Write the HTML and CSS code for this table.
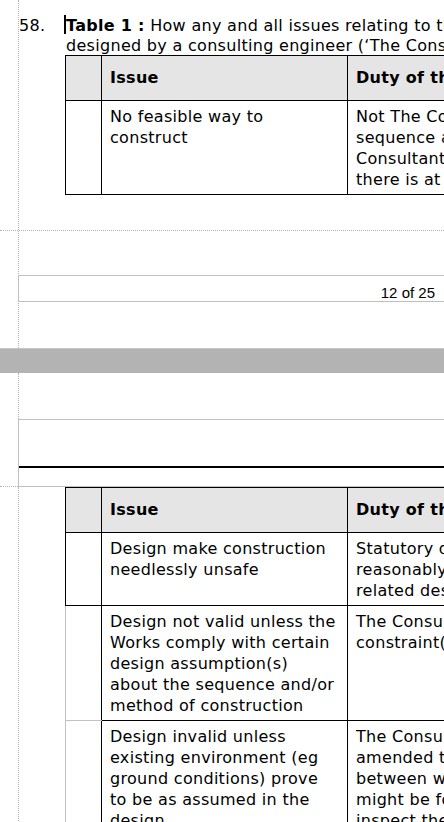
FILE: index.html
```html
<!DOCTYPE html>
<html>
<head>
<meta charset="utf-8">
<title>Document</title>
<link rel="stylesheet" href="styles.css">
</head>
<body>
<div class="viewer">
  <section class="page page-1">
    <div class="text-area">
      <div class="margin-col">
        <div class="para">
          <span class="num">58.</span>
          <div class="para-text">
            <span class="caret"></span><b>Table 1 :</b> How any and all issues relating to the constructability of Works<br>designed by a consulting engineer (‘The Consultant’) are to be dealt with
          </div>
        </div>
        <table class="issues">
          <colgroup><col class="c1"><col class="c2"><col class="c3"></colgroup>
          <tr><th></th><th>Issue</th><th>Duty of the Consultant</th></tr>
          <tr>
            <td></td>
            <td>No feasible way to construct</td>
            <td class="duty">Not The Consultant’s duty to prescribe a<br>sequence and method of construction. The<br>Consultant shall however demonstrate that<br>there is at least one feasible way to build</td>
          </tr>
        </table>
      </div>
    </div>
    <div class="footer-zone">
      <div class="footer-box"><span class="page-num">12 of 25</span></div>
    </div>
  </section>

  <div class="page-gap"></div>

  <section class="page page-2">
    <div class="header-zone">
      <div class="gutter"></div>
      <div class="header-col">
        <div class="header-box"><div class="header-rule"></div></div>
      </div>
    </div>
    <div class="body-zone">
      <table class="issues">
        <colgroup><col class="c1"><col class="c2"><col class="c3"></colgroup>
        <tr><th></th><th>Issue</th><th>Duty of the Consultant</th></tr>
        <tr>
          <td></td>
          <td>Design make construction needlessly unsafe</td>
          <td class="duty">Statutory duty to eliminate, so far as is<br>reasonably practicable, foreseeable risks<br>related design and construction</td>
        </tr>
        <tr>
          <td class="soft"></td>
          <td>Design not valid unless the Works comply with certain design assumption(s) about the sequence and/or method of construction</td>
          <td class="duty">The Consultant shall specify each<br>constraint(s) on the sequence and method</td>
        </tr>
        <tr>
          <td class="soft"></td>
          <td>Design invalid unless existing environment (eg ground conditions) prove to be as assumed in the design</td>
          <td class="duty">The Consultant shall state assumptions, and<br>amended the design if any discrepancy<br>between what was assumed and what<br>might be found. The Contractor shall<br>inspect the site and report</td>
        </tr>
      </table>
    </div>
  </section>
</div>
</body>
</html>
```

FILE: styles.css
```css
html, body {
  margin: 0;
  padding: 0;
  overflow: hidden;
  background: #fff;
}

body {
  width: 444px;
  height: 822px;
  font-family: "DejaVu Sans", Verdana, sans-serif;
  font-size: 16px;
  letter-spacing: 0.3px;
  color: #000;
}

.viewer {
  width: 720px;
}

/* ---------- page 1 ---------- */
.page-1 {
  height: 348px;
  display: flex;
  flex-direction: column;
}

.text-area {
  height: 230px;
  flex: none;
  border-bottom: 1px dotted #b4b4b4;
}

.margin-col {
  height: 100%;
  box-sizing: border-box;
  margin-left: 18px;
  border-left: 1px dotted #b4b4b4;
  padding-top: 16px;
}

.para {
  display: flex;
  line-height: 19.5px;
  white-space: nowrap;
}

.num {
  flex: none;
  width: 47px;
}

.para-text {
  position: relative;
}

.caret {
  position: absolute;
  left: -2px;
  top: -1px;
  width: 2px;
  height: 19px;
  background: #000;
}

/* ---------- tables ---------- */
.issues {
  margin-left: 46px;
  border-collapse: collapse;
  table-layout: fixed;
  width: 600px;
  line-height: 21px;
}

.issues col.c1 { width: 36px; }
.issues col.c2 { width: 246px; }
.issues col.c3 { width: 318px; }

.issues th,
.issues td {
  border: 1px solid #000;
  text-align: left;
  vertical-align: top;
}

.issues th {
  background: #e5e5e5;
  font-weight: bold;
  padding: 11px 8px 12px;
}

.issues td {
  padding: 5px 8px 4px;
}

.issues td.duty {
  white-space: nowrap;
}

.issues td.soft {
  border-left-color: #c2c2c2;
  border-bottom-color: #c2c2c2;
}

/* ---------- footer ---------- */
.footer-zone {
  flex: 1;
  margin-left: 18px;
  border-left: 1px dotted #b4b4b4;
  padding-top: 44px;
}

.footer-box {
  margin-left: -1px;
  border: 1px solid #c0c0c0;
  border-right: none;
  height: 25px;
  box-sizing: content-box;
  display: grid;
  grid-template-columns: 416px 1fr;
}

.page-num {
  font-family: "Liberation Sans", Arial, sans-serif;
  font-size: 15px;
  letter-spacing: 0;
  line-height: 17px;
  padding-top: 8px;
  text-align: right;
}

/* ---------- gap between pages ---------- */
.page-gap {
  height: 24px;
  background: #b3b3b3;
  border-top: 1px solid #c6c6c6;
}

/* ---------- page 2 ---------- */
.header-zone {
  display: grid;
  grid-template-columns: 18px 1fr;
}

.gutter {
  border-bottom: 1px dotted #b4b4b4;
}

.header-col {
  border-left: 1px dotted #b4b4b4;
  padding-top: 46px;
}

.header-box {
  margin-left: -1px;
  border: 1px solid #c0c0c0;
  border-right: none;
  padding: 46px 0 18px;
}

.header-rule {
  height: 2px;
  background: #000;
}

.body-zone {
  margin-left: 18px;
  border-left: 1px dotted #b4b4b4;
  height: 400px;
}
```
